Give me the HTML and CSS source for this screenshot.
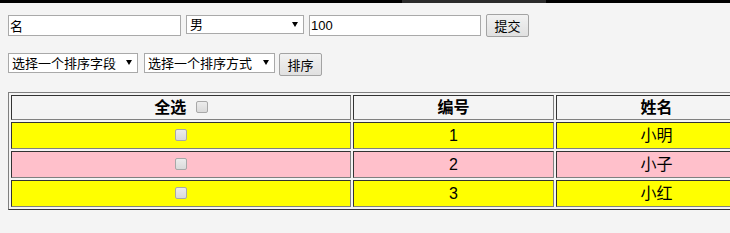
FILE: index.html
```html
<!DOCTYPE html>
<html lang="zh-CN">
<head>
    <meta charset="UTF-8">
    <title>学生列表</title>
    <link rel="stylesheet" href="styles.css">
</head>
<body>
    <div class="scrollbar"><div class="thumb"></div></div>

    <div class="page">
        <!-- 添加一行 -->
        <div class="row add-row">
            <input class="field name-field" type="text" value="名">
            <span class="select-box sex-box">
                <select class="select">
                    <option>男</option>
                    <option>女</option>
                </select>
            </span>
            <input class="field score-field" type="text" value="100">
            <button class="btn submit-btn">提交</button>
        </div>

        <!-- 排序 -->
        <div class="row sort-row">
            <span class="select-box field-box">
                <select class="select">
                    <option>选择一个排序字段</option>
                </select>
            </span>
            <span class="select-box order-box">
                <select class="select">
                    <option>选择一个排序方式</option>
                </select>
            </span>
            <button class="btn sort-btn">排序</button>
        </div>

        <div class="table-wrap">
            <table class="list">
                <thead>
                    <tr>
                        <th class="col-check">全选 <input class="check all-check" type="checkbox"></th>
                        <th class="col-id">编号</th>
                        <th class="col-name">姓名</th>
                    </tr>
                </thead>
                <tbody>
                    <tr class="odd">
                        <td><input class="check" type="checkbox"></td>
                        <td>1</td>
                        <td>小明</td>
                    </tr>
                    <tr class="even">
                        <td><input class="check" type="checkbox"></td>
                        <td>2</td>
                        <td>小子</td>
                    </tr>
                    <tr class="odd">
                        <td><input class="check" type="checkbox"></td>
                        <td>3</td>
                        <td>小红</td>
                    </tr>
                </tbody>
            </table>
        </div>
    </div>
</body>
</html>
```

FILE: styles.css
```css
* {
    margin: 0;
    padding: 0;
    box-sizing: border-box;
}

html {
    overflow: hidden;
}

body {
    background: #f4f4f4;
    font-family: 'Liberation Sans', 'Noto Sans CJK SC', sans-serif;
    color: #000;
    width: 730px;
}

.scrollbar {
    height: 3px;
    background: #000;
    position: relative;
}

.thumb {
    position: absolute;
    left: 402px;
    top: 0;
    width: 144px;
    height: 3px;
    background: #2b2b2b;
}

.page {
    padding: 11px 0 0 8px;
}

.row {
    display: flex;
    align-items: flex-start;
    height: 23px;
}

.sort-row {
    margin-top: 16px;
}

.field {
    height: 21px;
    margin-top: 1px;
    border: 1px solid #a9a9a9;
    background: #fff;
    font: 13px 'Liberation Sans', 'Noto Sans CJK SC', sans-serif;
    padding: 0 1px;
    outline: none;
}

.name-field {
    width: 173px;
}

.score-field {
    width: 172px;
    margin-left: 5px;
}

.select-box {
    position: relative;
    display: inline-block;
}

.select-box::after {
    content: "";
    position: absolute;
    right: 6px;
    top: 7px;
    border-left: 3.5px solid transparent;
    border-right: 3.5px solid transparent;
    border-top: 5px solid #000;
    pointer-events: none;
}

.select {
    appearance: none;
    -webkit-appearance: none;
    width: 100%;
    height: 100%;
    border: 1px solid #a9a9a9;
    background: #fff;
    font: 13px 'Liberation Sans', 'Noto Sans CJK SC', sans-serif;
    color: #000;
    padding: 0 0 0 3px;
    outline: none;
}

.sex-box {
    width: 118px;
    height: 19px;
    margin: 1px 0 0 5px;
}

.field-box {
    width: 130px;
    height: 20px;
}

.order-box {
    width: 131px;
    height: 20px;
    margin-left: 6px;
}

.btn {
    width: 43px;
    height: 23px;
    border: 1px solid #a3a3a3;
    border-radius: 2px;
    background: linear-gradient(#f2f2f2, #e0e0e0);
    font: 13px 'Liberation Sans', 'Noto Sans CJK SC', sans-serif;
    color: #000;
}

.submit-btn {
    margin-left: 5px;
}

.sort-btn {
    margin-left: 4px;
}

.table-wrap {
    margin-top: 16px;
    width: 722px;
    overflow: hidden;
}

.list {
    border-collapse: separate;
    border-spacing: 2px;
    border: 1px solid;
    border-color: #808080 #333 #333 #808080;
    table-layout: fixed;
    width: 752px;
    font-size: 16px;
}

.list th,
.list td {
    border: 1px solid;
    border-color: #333 #808080 #808080 #333;
    text-align: center;
    padding: 0;
    line-height: 20px;
}

.list th {
    height: 25px;
    font-weight: bold;
}

.list td {
    height: 27px;
}

.col-check {
    width: 340px;
}

.col-id {
    width: 201px;
}

.col-name {
    width: 201px;
}

.odd td {
    background: #ffff00;
}

.even td {
    background: #ffc0cb;
}

.check {
    appearance: none;
    -webkit-appearance: none;
    display: inline-block;
    width: 12px;
    height: 12px;
    border: 1px solid #a8a8a8;
    border-radius: 2px;
    background: linear-gradient(#ececec, #dadada);
    vertical-align: middle;
    margin-top: -2px;
}

.all-check {
    margin-left: 5px;
}
```
